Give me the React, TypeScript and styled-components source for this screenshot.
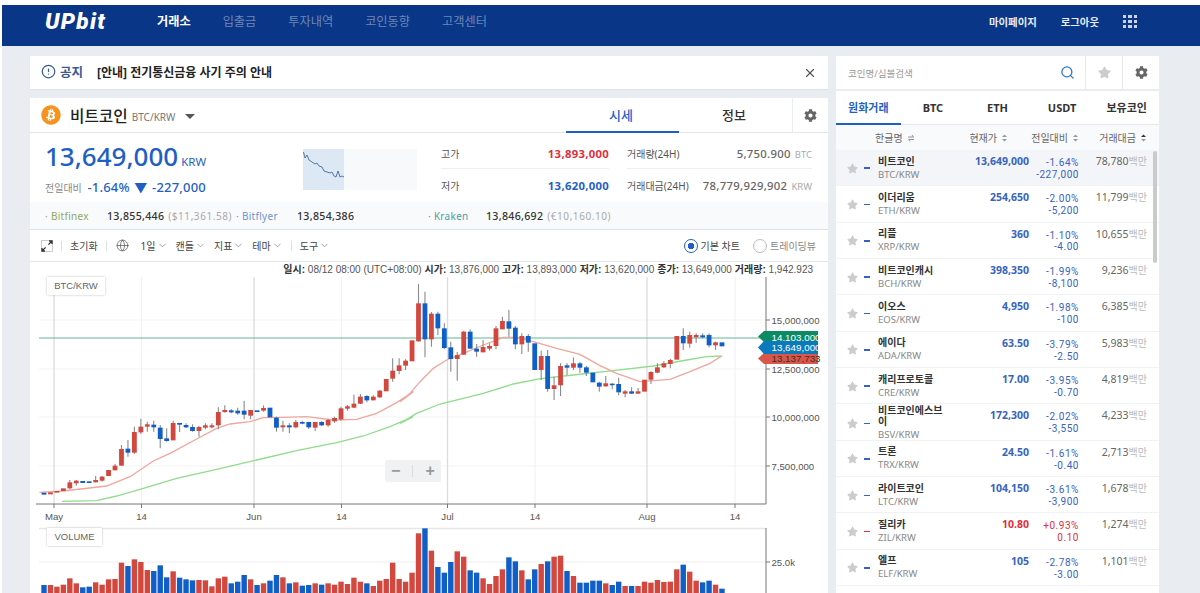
import React from "react";
import styled, { createGlobalStyle } from "styled-components";
import { Search, X, ChevronDown, Globe, CircleAlert } from "lucide-react";
import { FaStar, FaCog, FaBitcoin } from "react-icons/fa";

const BLUE = "#1f5fc4";
const RED = "#de2f3c";

const GlobalStyle = createGlobalStyle`
  html, body {
    margin: 0;
    height: 593px;
    overflow: hidden;
    background: #e9ecf1;
    font-family: "Noto Sans", "Noto Sans CJK KR", sans-serif;
    color: #333;
  }
  * { box-sizing: border-box; }
`;

const Page = styled.div`
  height: 593px;
  border-top: 5px solid #fff;
  border-left: 2px solid #fff;
  overflow: hidden;
`;

const Header = styled.header`
  height: 41px;
  background: #093687;
  display: flex;
  align-items: center;
  padding: 0 0 9px 43px;
`;

const Logo = styled.div`
  width: 112px;
  color: #fff;
  font: italic 900 22.5px "Roboto", sans-serif;
  letter-spacing: 1.3px;
`;

const Nav = styled.nav`
  display: flex;
  gap: 32px;
`;

const NavItem = styled.a<{ $on?: boolean }>`
  font-size: 12.2px;
  font-weight: ${(p) => (p.$on ? 700 : 400)};
  color: ${(p) => (p.$on ? "#fff" : "#6d88b8")};
`;

const HeaderRight = styled.div`
  margin-left: auto;
  margin-right: 63px;
  display: flex;
  align-items: center;
  gap: 24px;
  color: #e8edf6;
  font-size: 10.4px;
  font-weight: 700;
`;

const Dots = styled.div`
  width: 14px;
  margin-top: 1px;
  display: grid;
  grid-template-columns: repeat(3, 3.4px);
  grid-auto-rows: 3.4px;
  gap: 1.9px;
  & i { background: #c9d4e8; }
`;

const Main = styled.main`
  display: flex;
  gap: 8px;
  padding: 10px 0 0 28px;
`;

const LeftCol = styled.section`
  width: 798px;
`;

const Notice = styled.div`
  height: 33px;
  background: #fff;
  box-shadow: 0 1px 1px #dfe2e8;
  display: flex;
  align-items: center;
  padding: 0 0 2px 11px;
  margin-bottom: 9px;
  font-size: 12px;
  font-weight: 700;
  color: #222;
`;

const NoticeLabel = styled.span`
  color: #3a5a94;
  font-size: 12.5px;
  margin: 0 14px 0 4px;
`;

const Panel = styled.div`
  background: #fff;
  height: 495px;
`;

const TitleRow = styled.div`
  height: 35px;
  display: flex;
  align-items: center;
  border-bottom: 1px solid #e4e6eb;
  padding-left: 11px;
`;

const CoinName = styled.h1`
  margin: 0 4px 0 9px;
  font-size: 15.7px;
  font-weight: 500;
  color: #222;
`;

const CoinPair = styled.span`
  font-size: 10px;
  color: #777;
  margin-top: 3px;
`;

const Caret = styled.span`
  width: 0;
  height: 0;
  margin: 2px 0 0 10px;
  border: 5px solid transparent;
  border-top: 5px solid #555;
  border-bottom: 0;
  border-left-width: 5.5px;
  border-right-width: 5.5px;
`;

const Tabs = styled.div`
  margin-left: auto;
  display: flex;
  height: 100%;
`;

const Tab = styled.div<{ $on?: boolean }>`
  width: 113px;
  display: flex;
  align-items: center;
  justify-content: center;
  font-size: 13px;
  font-weight: 500;
  color: ${(p) => (p.$on ? BLUE : "#333")};
  border-bottom: 2px solid ${(p) => (p.$on ? BLUE : "transparent")};
  margin-bottom: -1px;
  padding-right: 3px;
`;

const GearCell = styled.div`
  width: 36px;
  display: flex;
  align-items: center;
  justify-content: center;
  color: #666;
  border-left: 1px solid #e9ecf1;
`;

const PriceArea = styled.div`
  height: 69px;
  display: flex;
  padding-left: 15px;
`;

const PriceLeft = styled.div`
  width: 258px;
  padding-top: 7px;
`;

const NowPrice = styled.div`
  color: ${BLUE};
  font-size: 26px;
  font-weight: 500;
  line-height: 33px;
  & small {
    font-size: 11.5px;
    font-weight: 400;
    margin-left: 3px;
  }
`;

const Diff = styled.div`
  color: ${BLUE};
  font-size: 13px;
  font-weight: 500;
  line-height: 18px;
  letter-spacing: 0.2px;
  white-space: nowrap;
  & small {
    color: #888;
    font-size: 10px;
    font-weight: 400;
    margin-right: 2px;
    letter-spacing: 0;
  }
  & i {
    font-style: normal;
    margin: 0 1px;
  }
`;

const Spark = styled.div`
  width: 114px;
  height: 41px;
  margin-top: 16px;
  background: linear-gradient(90deg, #dde8f5 0 41px, #f8f9fb 41px);
`;

const Stats = styled.div`
  margin: 6px 0 0 24px;
  display: grid;
  grid-template-columns: 168px 185px;
  column-gap: 18px;
`;

const Stat = styled.div<{ $last?: boolean }>`
  height: 30px;
  display: flex;
  align-items: center;
  justify-content: space-between;
  font-size: 10px;
  color: #555;
  border-bottom: ${(p) => (p.$last ? "none" : "1px solid #eceef2")};
`;

const StatValue = styled.span<{ $color?: string; $bold?: boolean }>`
  font-size: 11.3px;
  font-weight: ${(p) => (p.$bold ? 700 : 500)};
  color: ${(p) => p.$color || "#666"};
  letter-spacing: 0.3px;
  & small {
    color: #aaa;
    font-size: 9.5px;
    font-weight: 400;
    margin-left: 4px;
    letter-spacing: 0;
  }
`;

const ExchangeRow = styled.div`
  height: 28px;
  background: #f9fafc;
  border-bottom: 1px solid #dfe1e6;
  display: flex;
  align-items: center;
  padding-left: 15px;
  font-size: 10px;
`;

const Exchange = styled.div<{ $w: number }>`
  width: ${(p) => p.$w}px;
  display: flex;
  align-items: center;
`;

const ExName = styled.span<{ $w: number; $color: string }>`
  width: ${(p) => p.$w}px;
  color: ${(p) => p.$color};
  letter-spacing: 0.3px;
  white-space: nowrap;
`;

const ExPrice = styled.span`
  color: #333;
  font-size: 10.6px;
  font-weight: 500;
  letter-spacing: 0.3px;
`;

const ExConv = styled.span`
  color: #aaa;
  margin-left: 4px;
  letter-spacing: 0.55px;
`;

const Toolbar = styled.div`
  height: 32px;
  display: flex;
  align-items: center;
  padding-left: 11px;
  border-bottom: 1px solid #e4e6eb;
  font-size: 10px;
  color: #444;
`;

const Sep = styled.i<{ $tight?: boolean }>`
  width: 1px;
  height: 10px;
  background: #dcdfe5;
  margin: 0 8px 0 ${(p) => (p.$tight ? 0 : 8)}px;
`;

const ToolMenu = styled.span`
  display: flex;
  align-items: center;
  gap: 1px;
  margin-right: 8px;
  white-space: nowrap;
  & svg { color: #999; }
`;

const ToolRight = styled.div`
  margin-left: auto;
  margin-right: 12px;
  display: flex;
  align-items: center;
  gap: 13px;
  font-size: 10px;
`;

const Radio = styled.span<{ $on?: boolean }>`
  display: flex;
  align-items: center;
  gap: 3px;
  color: ${(p) => (p.$on ? "#444" : "#888")};
  &::before {
    content: "";
    width: 12px;
    height: 12px;
    border-radius: 50%;
    border: ${(p) => (p.$on ? `1.5px solid ${BLUE}` : "1.5px solid #bbb")};
    background: ${(p) => (p.$on ? `radial-gradient(circle, ${BLUE} 0 3px, #fff 3.5px)` : "#fff")};
  }
`;

const ChartBox = styled.div`
  position: relative;
  height: 331px;
  overflow: hidden;
`;

const ChartInfo = styled.div`
  position: absolute;
  top: 1px;
  right: 15px;
  font: 10px "Liberation Sans", "Noto Sans CJK KR", sans-serif;
  line-height: 14px;
  color: #555;
  white-space: nowrap;
  & b { color: #333; font-weight: 700; margin-left: 3px; }
`;

const Legend = styled.div<{ $top: number; $w: number }>`
  position: absolute;
  left: 17px;
  top: ${(p) => p.$top}px;
  width: ${(p) => p.$w}px;
  height: 18px;
  background: #fff;
  box-shadow: 0 0 2px #bbb;
  color: #666;
  text-align: center;
  font: 9.5px/18px "Liberation Sans", sans-serif;
`;

const ZoomBar = styled.div`
  position: absolute;
  left: 355px;
  top: 198px;
  width: 56px;
  height: 22px;
  border-radius: 2px;
  background: #f0f1f2;
  color: #999;
  display: flex;
  align-items: center;
  justify-content: space-around;
  font: 700 16px/20px "Liberation Sans", sans-serif;
  & i { width: 1px; height: 12px; background: #ddd; }
`;

const RightCol = styled.aside`
  width: 323px;
`;

const SearchRow = styled.div`
  height: 33px;
  background: #fff;
  margin-bottom: 2px;
  display: flex;
  align-items: center;
  padding-left: 12px;
  font-size: 9.5px;
  color: #999;
`;

const SearchIcon = styled.div`
  margin-left: auto;
  margin-right: 10px;
  display: flex;
  color: #2a74d0;
`;

const IconCell = styled.div<{ $color: string }>`
  width: 37px;
  height: 100%;
  display: flex;
  align-items: center;
  justify-content: center;
  border-left: 1px solid #e6e8ec;
  color: ${(p) => p.$color};
`;

const MarketTabs = styled.div`
  height: 34px;
  background: #fff;
  display: grid;
  grid-template-columns: repeat(5, 1fr);
  border-bottom: 1px solid #e4e6eb;
`;

const MarketTab = styled.div<{ $on?: boolean }>`
  display: flex;
  align-items: center;
  justify-content: center;
  font-size: 11px;
  font-weight: 700;
  color: ${(p) => (p.$on ? BLUE : "#333")};
  border-bottom: 2px solid ${(p) => (p.$on ? BLUE : "transparent")};
  margin-bottom: -1px;
`;

const ListWrap = styled.div`
  position: relative;
  background: #fff;
  height: 468px;
  overflow: hidden;
`;

const Grid = `
  display: grid;
  grid-template-columns: 12px 20px 82px 69px 50px 68px;
  padding-left: 10px;
`;

const ListHead = styled.div`
  ${Grid}
  height: 25px;
  background: #f9fafc;
  align-items: center;
  font-size: 10px;
  color: #666;
`;

const HeadCell = styled.span<{ $pad?: number }>`
  text-align: right;
  white-space: nowrap;
  padding-right: ${(p) => p.$pad || 0}px;
`;

const HeadName = styled.span`
  grid-column: 2 / 4;
  padding-left: 17px;
  white-space: nowrap;
`;

const Row = styled.div<{ $on?: boolean }>`
  ${Grid}
  height: 36.35px;
  align-items: center;
  background: ${(p) => (p.$on ? "#f4f5f8" : "#fff")};
  border-bottom: 1px solid #f1f2f5;
`;

const StarCell = styled.span`
  display: flex;
  justify-content: center;
  color: #ccc;
  margin-top: 1px;
`;

const Dash = styled.span<{ $color: string }>`
  width: 6px;
  height: 1.5px;
  margin: 1px 0 0 6px;
  background: ${(p) => p.$color};
`;

const NameCell = styled.div`
  min-width: 0;
  padding-top: 1px;
`;

const CoinTitle = styled.div`
  font-size: 10px;
  line-height: 11px;
  font-weight: 700;
  color: #333;
  width: 70px;
`;

const CoinSym = styled.div`
  font-size: 9.5px;
  line-height: 13px;
  color: #888;
  margin-top: 1px;
`;

const PriceCell = styled.div<{ $color: string }>`
  align-self: start;
  padding-top: 5px;
  text-align: right;
  font-size: 10.5px;
  line-height: 13px;
  font-weight: 700;
  color: ${(p) => p.$color};
`;

const ChangeCell = styled.div<{ $color: string }>`
  text-align: right;
  font: 10px/11.8px "Roboto", sans-serif;
  letter-spacing: 0.55px;
  color: ${(p) => p.$color};
  align-self: start;
  padding-top: 7px;
`;

const VolCell = styled.div`
  align-self: start;
  padding-top: 5px;
  text-align: right;
  font-size: 10.5px;
  line-height: 13px;
  color: #666;
  white-space: nowrap;
  & small {
    color: #bbb;
    font-size: 10px;
  }
`;

const Scrollbar = styled.div`
  position: absolute;
  right: 2px;
  top: 26px;
  width: 4px;
  height: 112px;
  border-radius: 2px;
  background: #c9cacc;
`;

// [colour, body top, body bottom, wick top, wick bottom], y in 3x reference px
const candles: [string, number, number, number?, number?][] = [
  ["b",698,704],["r",697,703],["r",693,698],["r",685,693],["r",667,685,660,688],["r",662,670,660,677],
  ["b",663,669],["b",664,669],["r",660,667,648,667],["r",650,662,648,665],["r",630,648],["r",617,631,612,631],
  ["r",567,617,555,617],["b",566,578,540,590],["r",516,578,500,582],["r",500,517,476,522],["r",493,500,485,515],
  ["b",494,502,482,515],["b",503,537,495,565],["b",535,543,505,545],["r",489,541,482,541],["b",489,494,489,516],
  ["b",495,502,490,504],["b",501,513,493,515],["r",501,513,497,530],["r",496,503,490,508],["r",496,502,490,505],
  ["r",456,496,442,508],["r",450,456,436,458],["b",451,457,447,460],["b",452,460,443,465],["b",452,464,423,478],
  ["r",450,467,450,478],["b",451,456],["r",444,452,436,455],["b",443,472],["b",473,503,470,515],["r",496,502,482,515],
  ["b",496,502,490,520],["r",486,502,480,505],["b",486,491,482,493],["b",486,502,485,507],["r",486,503,486,513],
  ["b",486,496,484,498],["r",480,496,476,500],["r",474,484,470,488],["r",445,478,440,482],["r",439,446,435,452],
  ["r",431,443,404,445],["r",410,431,402,432],["b",408,421,406,427],["r",410,421,406,421],["r",392,412,390,414],
  ["r",357,394],["r",332,356,295,365],["r",316,333,295,343],["r",302,317,298,330],["r",241,304],["r",130,244,72,245],
  ["b",130,238,95,292],["r",161,238,156,260],["b",161,205,155,225],["b",205,264,190,268],["b",262,297,245,335],
  ["r",285,297,276,362],["r",215,284,212,284],["b",215,266,208,266],["b",266,275,252,290],["r",261,277,240,277],
  ["r",258,266,250,272],["r",205,258,198,268],["r",183,208,170,208],["b",184,206,150,230],["b",203,253,198,268],
  ["r",228,253,220,282],["b",228,248,222,275],["b",250,330],["r",288,330,272,360],["b",288,387,270,395],
  ["r",376,387,350,420],["r",318,376,310,408],["b",316,323,310,345],["r",310,323,292,330],["b",310,323,306,338],
  ["b",322,338,318,348],["b",338,367],["b",368,380,365,395],["r",370,379,348,380],["b",371,375,370,388],
  ["b",372,397,353,406],["r",394,401,390,412],["b",394,401,382,402],["r",394,401,384,402],["r",359,395],
  ["r",336,359,334,372],["r",322,338,310,340],["r",310,322,304,324],["r",300,312,296,325],["r",228,299],
  ["b",228,250,205,270],["r",225,251,215,263],["r",225,232,220,248],["b",226,232,220,235],["b",225,256,220,262],
  ["r",247,256,245,270],["b",247,259],
];

// volume bar tops, y in 3x reference px of the crop starting at y=490
const volumes = [
  285,285,290,284,265,280,292,290,277,284,268,267,218,228,208,216,240,243,226,262,244,263,268,271,270,271,
  289,265,260,280,275,255,268,285,280,272,255,262,280,277,287,285,280,284,280,284,275,282,263,275,280,288,
  272,267,218,267,275,248,130,115,182,231,248,216,184,200,241,248,265,282,258,238,202,214,241,268,238,222,
  214,200,197,243,258,278,278,272,272,280,285,275,288,288,288,275,278,270,276,275,238,224,245,272,277,272,284,296,
];

const cx = (i: number) => 14 + i * 6.457;
const cy = (z: number) => z / 3 - 2;
const colorOf = (c: string) => (c === "r" ? "#d2483f" : "#0f5fc6");

const line = (a: number[][], b: number[][]) =>
  [
    ...a.map(([x, y]) => `${x / 3},${cy(y)}`),
    ...b.map(([x, y]) => `${370 + x / 3},${cy(y)}`),
  ].join(" ");

const maPink = line(
  [[28,697],[100,693],[230,678],[300,650],[370,603],[420,580],[500,537],[560,505],[600,492],[660,485],[700,473],[760,472],[830,470],[910,480],[980,478],[1040,460],[1100,428],[1150,395]],
  [[0,425],[30,400],[60,365],[100,325],[140,300],[190,280],[250,255],[310,232],[350,232],[400,245],[470,265],[540,283],[600,317],[650,340],[720,365],[810,358],[870,335],[930,310],[965,288]]
);
const maGreen = line(
  [[96,724],[200,722],[260,708],[340,685],[440,655],[560,628],[680,600],[800,572],[920,548],[1000,528],[1080,500],[1150,470]],
  [[0,490],[50,460],[120,432],[250,400],[340,372],[420,356],[520,345],[640,332],[760,318],[860,300],[920,290],[965,288]]
);

const darkGrid = [24, 224, 417.5, 617];
const lightGrid = [111.5, 311.5, 505, 705];
const priceTicks: [string, number][] = [["15,000,000",58],["12,500,000",107],["10,000,000",155],["7,500,000",204]];
const dates: [string, number][] = [["May",24],["14",111.5],["Jun",224],["14",311.5],["Jul",417.5],["14",505],["Aug",617],["14",705]];

const flagPath = (top: number, h: number) =>
  `M728 ${top + h / 2} L734 ${top} H788 V${top + h} H734 Z`;

const ChartSvg = () => (
  <svg width="798" height="331" viewBox="0 0 798 331" style={{ display: "block" }}>
    {[58, 107, 155, 204, 300].map((y) => (
      <line key={y} x1="9" x2="736" y1={y} y2={y} stroke="#f3f3f3" />
    ))}
    {lightGrid.map((x) => (
      <line key={x} x1={x} x2={x} y1="15" y2="242" stroke="#f0f0f0" />
    ))}
    {darkGrid.map((x) => (
      <line key={x} x1={x} x2={x} y1="15" y2="242" stroke="#dcdcdc" strokeWidth="1.3" />
    ))}
    <line x1="9" x2="736" y1="76" y2="76" stroke="#62b596" strokeWidth="1.2" />
    <polyline points={maGreen} fill="none" stroke="#8fdc8a" strokeWidth="1.3" />
    <polyline points={maPink} fill="none" stroke="#f0a69c" strokeWidth="1.3" />
    {candles.map(([c, t, b, wt, wb], i) => (
      <g key={i}>
        {wt !== undefined && (
          <line x1={cx(i)} x2={cx(i)} y1={cy(wt)} y2={cy(wb as number)} stroke="#8a8a8a" strokeWidth="1.1" />
        )}
        <rect x={cx(i) - 2.4} y={cy(t)} width="4.8" height={Math.max((b - t) / 3, 1.5)} fill={colorOf(c)} />
      </g>
    ))}
    <line x1="736" x2="736" y1="15" y2="242" stroke="#777" />
    <line x1="6" x2="736" y1="242" y2="242" stroke="#777" />
    {priceTicks.map(([t, y]) => (
      <g key={t}>
        <line x1="736" x2="740" y1={y} y2={y} stroke="#777" />
        <text x="741.5" y={y + 3.5} fontSize="9.6" fill="#555" fontFamily="Liberation Sans">{t}</text>
      </g>
    ))}
    {dates.map(([t, x], i) => (
      <g key={i}>
        <line x1={x} x2={x} y1="242" y2="246" stroke="#777" />
        <text x={x} y="258" fontSize="9.6" fill="#555" textAnchor="middle" fontFamily="Liberation Sans">{t}</text>
      </g>
    ))}
    <path d={flagPath(69, 11)} fill="#0b8a66" />
    <text x="741.5" y="79" fontSize="9.8" fill="#fff" fontFamily="Liberation Sans">14,103,000</text>
    <path d={flagPath(91, 11)} fill="#d9574a" />
    <text x="741.5" y="100" fontSize="9.8" fill="#4a2a22" fontFamily="Liberation Sans">13,137,733</text>
    <path d={flagPath(79, 13)} fill="#0a79bd" />
    <text x="741.5" y="89" fontSize="9.8" fill="#fff" fontFamily="Liberation Sans">13,649,000</text>

    <line x1="9" x2="736" y1="266.5" y2="266.5" stroke="#e6e6e6" strokeWidth="1.5" />
    <line x1="9" x2="736" y1="300" y2="300" stroke="#f4f4f4" />
    {volumes.map((z, i) => (
      <rect key={i} x={cx(i) - 2.7} y={z / 3 + 228} width="5.4" height={331} fill={colorOf(candles[i][0])} />
    ))}
    <line x1="736" x2="736" y1="266" y2="331" stroke="#777" />
    <line x1="736" x2="740" y1="300" y2="300" stroke="#777" />
    <text x="741.5" y="303.5" fontSize="9.6" fill="#555" fontFamily="Liberation Sans">25.0k</text>
  </svg>
);

const SortIcon = ({ both }: { both?: boolean }) => (
  <svg width="7" height="8" viewBox="0 0 7 8" style={{ marginLeft: 4 }}>
    <path d="M3.5 0.5 L6 3 H1 Z" fill={both ? "#333" : "#999"} />
    <path d="M3.5 7.5 L6 5 H1 Z" fill="#999" />
  </svg>
);

const SwapIcon = () => (
  <svg width="8" height="8" viewBox="0 0 8 8" style={{ marginLeft: 4 }}>
    <path d="M1 3 H6.5 L5 1 M7 5.5 H1.5 L3 7.5" fill="none" stroke="#888" strokeWidth="0.9" />
  </svg>
);

const ExpandIcon = () => (
  <svg width="12" height="12" viewBox="0 0 12 12">
    <rect x="0.5" y="0.5" width="11" height="11" fill="none" stroke="#ccc" />
    <path d="M1 11 L4.6 7.4 M1 8 V11 H4 M11 1 L7.4 4.6 M8 1 H11 V4" fill="none" stroke="#333" strokeWidth="1.3" />
  </svg>
);

const SparkLine = () => (
  <svg width="114" height="41" viewBox="0 0 114 41" style={{ display: "block" }}>
    <polyline
      points="0.5,3 2,9 4,6 6,11 9,13 12,15 14,14 16,17 19,18 21,22 24,23 27,24 29,23 31,27 33,28 35,22 37,28 39,27 41,28"
      fill="none"
      stroke="#47699f"
      strokeWidth="0.9"
    />
  </svg>
);

const coins = [
  { name: "비트코인", sym: "BTC/KRW", price: "13,649,000", pct: "-1.64%", diff: "-227,000", vol: "78,780" },
  { name: "이더리움", sym: "ETH/KRW", price: "254,650", pct: "-2.00%", diff: "-5,200", vol: "11,799" },
  { name: "리플", sym: "XRP/KRW", price: "360", pct: "-1.10%", diff: "-4.00", vol: "10,655" },
  { name: "비트코인캐시", sym: "BCH/KRW", price: "398,350", pct: "-1.99%", diff: "-8,100", vol: "9,236" },
  { name: "이오스", sym: "EOS/KRW", price: "4,950", pct: "-1.98%", diff: "-100", vol: "6,385" },
  { name: "에이다", sym: "ADA/KRW", price: "63.50", pct: "-3.79%", diff: "-2.50", vol: "5,983" },
  { name: "캐리프로토콜", sym: "CRE/KRW", price: "17.00", pct: "-3.95%", diff: "-0.70", vol: "4,819" },
  { name: "비트코인에스브이", sym: "BSV/KRW", price: "172,300", pct: "-2.02%", diff: "-3,550", vol: "4,233" },
  { name: "트론", sym: "TRX/KRW", price: "24.50", pct: "-1.61%", diff: "-0.40", vol: "2,713" },
  { name: "라이트코인", sym: "LTC/KRW", price: "104,150", pct: "-3.61%", diff: "-3,900", vol: "1,678" },
  { name: "질리카", sym: "ZIL/KRW", price: "10.80", pct: "+0.93%", diff: "0.10", vol: "1,274", up: true },
  { name: "엘프", sym: "ELF/KRW", price: "105", pct: "-2.78%", diff: "-3.00", vol: "1,101" },
];

export default function App() {
  return (
    <Page>
      <GlobalStyle />
      <Header>
        <Logo>UPbit</Logo>
        <Nav>
          <NavItem $on>거래소</NavItem>
          <NavItem>입출금</NavItem>
          <NavItem>투자내역</NavItem>
          <NavItem>코인동향</NavItem>
          <NavItem>고객센터</NavItem>
        </Nav>
        <HeaderRight>
          <span>마이페이지</span>
          <span>로그아웃</span>
          <Dots>
            {Array.from({ length: 9 }).map((_, i) => (
              <i key={i} />
            ))}
          </Dots>
        </HeaderRight>
      </Header>
      <Main>
        <LeftCol>
          <Notice>
            <CircleAlert size={15} color="#3a5a94" strokeWidth={2} />
            <NoticeLabel>공지</NoticeLabel>
            [안내] 전기통신금융 사기 주의 안내
            <X size={14} color="#555" style={{ margin: "2px 11px 0 auto" }} />
          </Notice>
          <Panel>
            <TitleRow>
              <FaBitcoin size={20} color="#f6931d" />
              <CoinName>비트코인</CoinName>
              <CoinPair>BTC/KRW</CoinPair>
              <Caret />
              <Tabs>
                <Tab $on>시세</Tab>
                <Tab>정보</Tab>
                <GearCell>
                  <FaCog size={13} />
                </GearCell>
              </Tabs>
            </TitleRow>
            <PriceArea>
              <PriceLeft>
                <NowPrice>
                  13,649,000<small>KRW</small>
                </NowPrice>
                <Diff>
                  <small>전일대비</small> -1.64% <i>▼</i> -227,000
                </Diff>
              </PriceLeft>
              <Spark>
                <SparkLine />
              </Spark>
              <Stats>
                <Stat>
                  고가<StatValue $color={RED} $bold>13,893,000</StatValue>
                </Stat>
                <Stat>
                  거래량(24H)
                  <StatValue>
                    5,750.900<small>BTC</small>
                  </StatValue>
                </Stat>
                <Stat $last>
                  저가<StatValue $color={BLUE} $bold>13,620,000</StatValue>
                </Stat>
                <Stat $last>
                  거래대금(24H)
                  <StatValue>
                    78,779,929,902<small>KRW</small>
                  </StatValue>
                </Stat>
              </Stats>
            </PriceArea>
            <ExchangeRow>
              <Exchange $w={191}>
                <ExName $w={62} $color="#8fa85c">· Bitfinex</ExName>
                <ExPrice>13,855,446</ExPrice>
                <ExConv>($11,361.58)</ExConv>
              </Exchange>
              <Exchange $w={192}>
                <ExName $w={61} $color="#6f97cf">· Bitflyer</ExName>
                <ExPrice>13,854,386</ExPrice>
              </Exchange>
              <Exchange $w={300}>
                <ExName $w={58} $color="#4f9e9e">· Kraken</ExName>
                <ExPrice>13,846,692</ExPrice>
                <ExConv>(€10,160.10)</ExConv>
              </Exchange>
            </ExchangeRow>
            <Toolbar>
              <ExpandIcon />
              <Sep />
              초기화
              <Sep />
              <Globe size={13} color="#444" strokeWidth={1.2} style={{ margin: "0 12px 0 1px" }} />
              <ToolMenu>1일<ChevronDown size={11} /></ToolMenu>
              <ToolMenu>캔들<ChevronDown size={11} /></ToolMenu>
              <ToolMenu>지표<ChevronDown size={11} /></ToolMenu>
              <ToolMenu>테마<ChevronDown size={11} /></ToolMenu>
              <Sep $tight />
              <ToolMenu>도구<ChevronDown size={11} /></ToolMenu>
              <ToolRight>
                <Radio $on>기본 차트</Radio>
                <Radio>트레이딩뷰</Radio>
              </ToolRight>
            </Toolbar>
            <ChartBox>
              <ChartSvg />
              <ChartInfo>
                <b>일시:</b> 08/12 08:00 (UTC+08:00)
                <b>시가:</b> 13,876,000
                <b>고가:</b> 13,893,000
                <b>저가:</b> 13,620,000
                <b>종가:</b> 13,649,000
                <b>거래량:</b> 1,942.923
              </ChartInfo>
              <Legend $top={15} $w={58}>BTC/KRW</Legend>
              <ZoomBar>
                <span>−</span>
                <i />
                <span>+</span>
              </ZoomBar>
              <Legend $top={266} $w={55}>VOLUME</Legend>
            </ChartBox>
          </Panel>
        </LeftCol>
        <RightCol>
          <SearchRow>
            코인명/심볼검색
            <SearchIcon>
              <Search size={15} strokeWidth={2} />
            </SearchIcon>
            <IconCell $color="#ccc">
              <FaStar size={13} />
            </IconCell>
            <IconCell $color="#666">
              <FaCog size={13} />
            </IconCell>
          </SearchRow>
          <MarketTabs>
            <MarketTab $on>원화거래</MarketTab>
            <MarketTab>BTC</MarketTab>
            <MarketTab>ETH</MarketTab>
            <MarketTab>USDT</MarketTab>
            <MarketTab>보유코인</MarketTab>
          </MarketTabs>
          <ListWrap>
            <ListHead>
              <HeadName>한글명<SwapIcon /></HeadName>
              <HeadCell $pad={21}>현재가<SortIcon /></HeadCell>
              <HeadCell>전일대비<SortIcon /></HeadCell>
              <HeadCell>거래대금<SortIcon both /></HeadCell>
            </ListHead>
            {coins.map((c, i) => {
              const color = c.up ? RED : "#3663c0";
              return (
                <Row key={c.sym} $on={i === 0}>
                  <StarCell>
                    <FaStar size={11} />
                  </StarCell>
                  <Dash $color={color} />
                  <NameCell>
                    <CoinTitle>{c.name}</CoinTitle>
                    <CoinSym>{c.sym}</CoinSym>
                  </NameCell>
                  <PriceCell $color={color}>{c.price}</PriceCell>
                  <ChangeCell $color={color}>
                    {c.pct}
                    <br />
                    {c.diff}
                  </ChangeCell>
                  <VolCell>
                    {c.vol}
                    <small>백만</small>
                  </VolCell>
                </Row>
              );
            })}
            <Scrollbar />
          </ListWrap>
        </RightCol>
      </Main>
    </Page>
  );
}
